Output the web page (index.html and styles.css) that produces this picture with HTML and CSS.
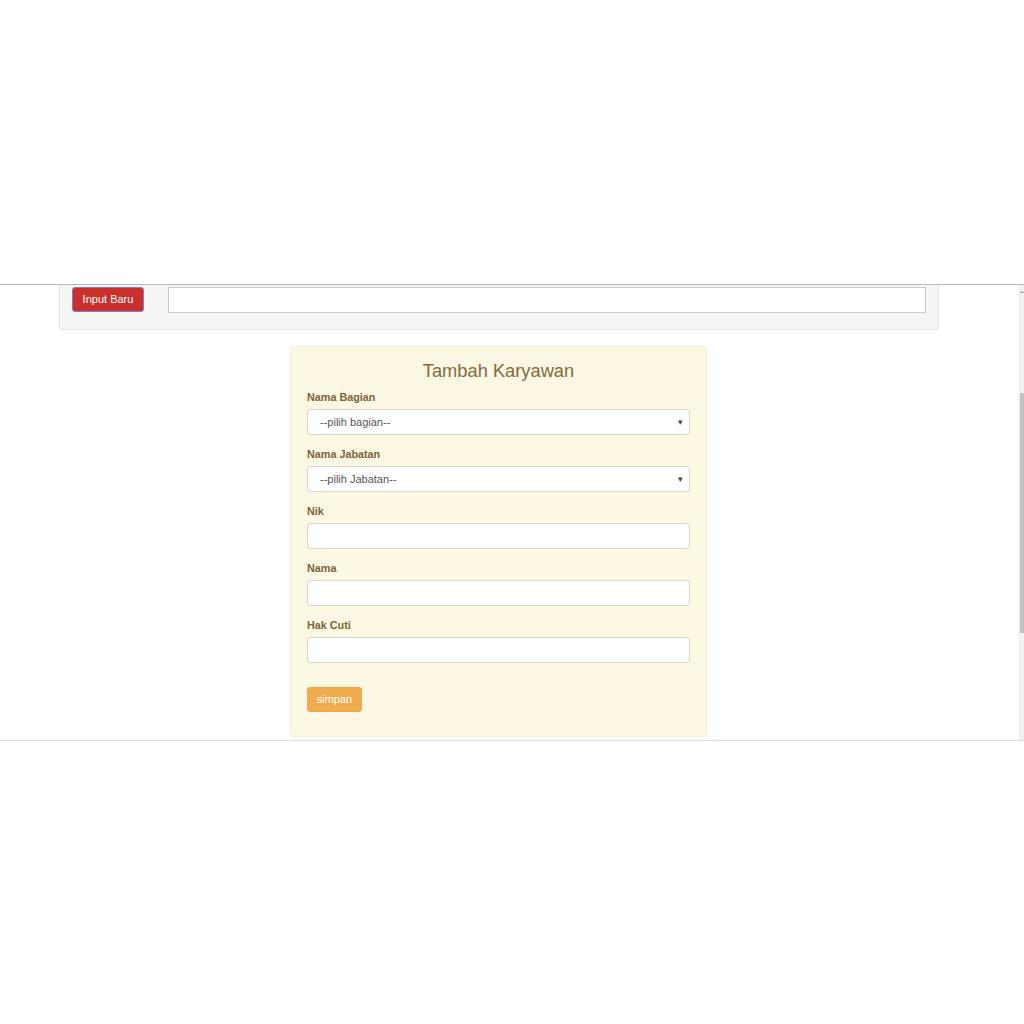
FILE: index.html
```html
<!DOCTYPE html>
<html>
<head>
<meta charset="utf-8">
<link rel="stylesheet" href="styles.css">
</head>
<body>
<div class="spacer"></div>
<div class="frame">
  <div class="content">
    <div class="well">
      <button class="btn btn-red">Input Baru</button>
      <input class="search" type="text">
    </div>
    <div class="panel">
      <h3 class="title">Tambah Karyawan</h3>
      <div class="group">
        <label class="lbl">Nama Bagian</label>
        <div class="select"><span>--pilih bagian--</span><span class="caret">&#9662;</span></div>
      </div>
      <div class="group">
        <label class="lbl">Nama Jabatan</label>
        <div class="select"><span>--pilih Jabatan--</span><span class="caret">&#9662;</span></div>
      </div>
      <div class="group">
        <label class="lbl">Nik</label>
        <div class="field"></div>
      </div>
      <div class="group">
        <label class="lbl">Nama</label>
        <div class="field"></div>
      </div>
      <div class="group">
        <label class="lbl">Hak Cuti</label>
        <div class="field"></div>
      </div>
      <button class="btn btn-orange">simpan</button>
    </div>
  </div>
  <div class="scrollbar">
    <div class="arrow"></div>
    <div class="thumb"></div>
  </div>
</div>
</body>
</html>
```
FILE: styles.css
```css
html, body {
  margin: 0;
  padding: 0;
  background: #ffffff;
  font-family: "Liberation Sans", Arial, sans-serif;
}
.spacer {
  height: 284px;
}
.frame {
  height: 455px;
  border-top: 1px solid #b9b9b9;
  border-bottom: 1px solid #dcdcdc;
  display: flex;
  overflow: hidden;
}
.content {
  flex: 1;
  overflow: hidden;
}
.well {
  margin: -10px 0 0 59px;
  width: 854px;
  padding: 11px 12px 16px 12px;
  background: #f5f5f5;
  border: 1px solid #e6e6e6;
  border-radius: 3px;
  display: flex;
  align-items: flex-start;
  gap: 24px;
}
.btn {
  font-family: "Liberation Sans", Arial, sans-serif;
  font-size: 11px;
  color: #ffffff;
  height: 25px;
  border-radius: 3px;
  padding: 0;
  margin: 0;
  line-height: 23px;
  white-space: nowrap;
  text-align: center;
}
.btn-red {
  width: 72px;
  background: #c9302c;
  border: 1px solid #7f7fd2;
}
.search {
  flex: 1;
  height: 26px;
  box-sizing: border-box;
  margin: 0;
  border: 1px solid #cccccc;
  background: #ffffff;
  padding: 0;
}
.panel {
  margin: 16px 0 0 290px;
  width: 383px;
  padding: 12px 16px 24px 16px;
  background: #fcf8e3;
  border: 1px solid #f7f0d6;
  border-radius: 3px;
}
.title {
  margin: 0 0 7px 0;
  font-weight: normal;
  font-size: 18.3px;
  line-height: 24px;
  color: #86693d;
  text-align: center;
}
.group {
  display: flex;
  flex-direction: column;
  margin-bottom: 12px;
}
.lbl {
  font-size: 10.8px;
  font-weight: bold;
  color: #7d6237;
  line-height: 14px;
  margin-bottom: 5px;
}
.select, .field {
  height: 26px;
  box-sizing: border-box;
  background: #ffffff;
  border: 1px solid #d9d6cc;
  border-radius: 3px;
}
.select {
  display: flex;
  align-items: center;
  justify-content: space-between;
  padding: 0 6px 0 12px;
  font-size: 11px;
  color: #555555;
}
.caret {
  font-size: 9px;
  color: #444444;
}
.group:last-of-type {
  margin-bottom: 24px;
}
.btn-orange {
  width: 55px;
  background: #f0ad4e;
  border: 1px solid #eea846;
}
.scrollbar {
  width: 5px;
  background: #f1f1f1;
  border-left: 1px solid #f7f7f7;
  display: flex;
  flex-direction: column;
  align-items: center;
}
.arrow {
  margin-top: 6px;
  width: 0;
  height: 0;
  border-left: 2px solid transparent;
  border-right: 2px solid transparent;
  border-bottom: 2px solid #a0a0a0;
}
.thumb {
  margin-top: 100px;
  width: 4px;
  height: 240px;
  background: #c1c1c1;
}
```
